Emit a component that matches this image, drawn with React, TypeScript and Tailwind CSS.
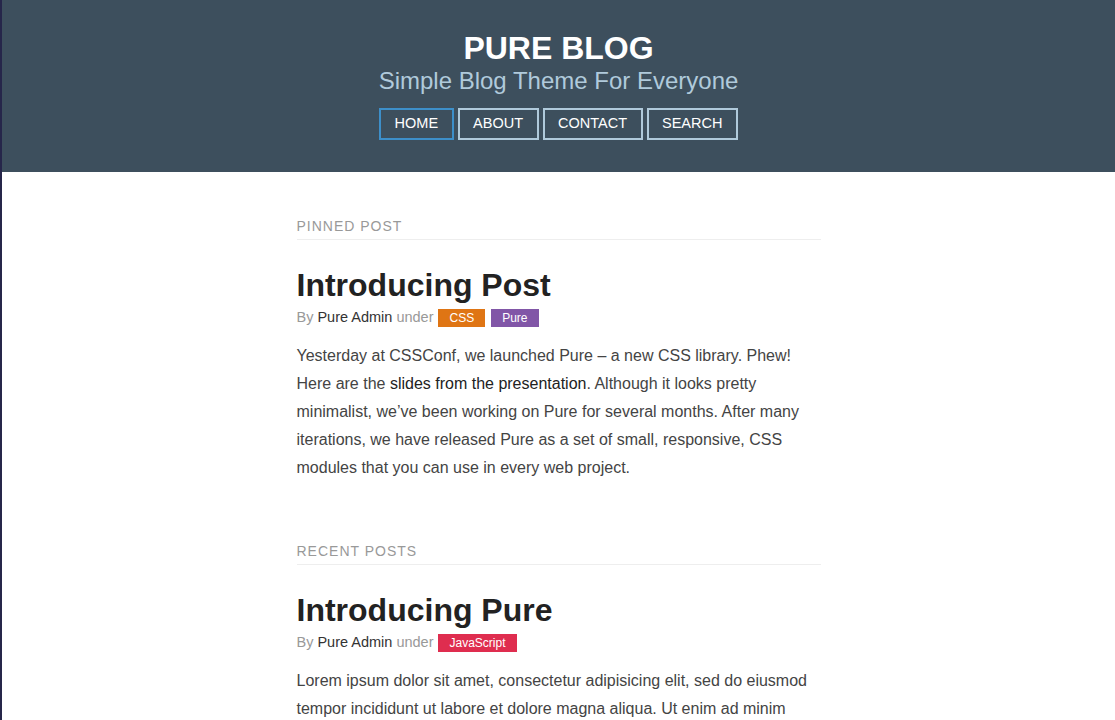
import React from 'react';

const navItems = [
  { label: 'HOME', active: true },
  { label: 'ABOUT', active: false },
  { label: 'CONTACT', active: false },
  { label: 'SEARCH', active: false },
];

function Tag({ label, color }: { label: string; color: string }) {
  return (
    <span className={`inline-flex items-center h-[18px] px-[11px] text-[12px] text-white ${color}`}>
      {label}
    </span>
  );
}

function PostMeta({ tags }: { tags: { label: string; color: string }[] }) {
  return (
    <div className="mt-[5px] flex items-center h-5 text-[14.5px] text-[#999]">
      <span>By</span>
      <span className="ml-[4px] text-[#333]">Pure Admin</span>
      <span className="ml-[4px] mr-[5px]">under</span>
      <div className="flex gap-[6px]">
        {tags.map((t) => (
          <Tag key={t.label} label={t.label} color={t.color} />
        ))}
      </div>
    </div>
  );
}

function SectionHead({ title }: { title: string }) {
  return (
    <h2 className="text-[14px] leading-5 tracking-[1px] text-[#999] uppercase pb-[3px] border-b border-[#eee]">
      {title}
    </h2>
  );
}

export default function App() {
  return (
    <div
      className="min-h-[720px] bg-white border-l-2 border-[#26264a]"
      style={{ fontFamily: '"Liberation Sans", Arial, sans-serif' }}
    >
      <header className="h-[172px] bg-[#3d4f5d] flex flex-col items-center pt-[30px]">
        <h1 className="text-[32px] leading-[36px] font-bold text-white">PURE BLOG</h1>
        <h2 className="text-[24px] leading-[30px] text-[#b0cadb]">Simple Blog Theme For Everyone</h2>
        <nav className="mt-[12px] flex gap-[4px]">
          {navItems.map((item) => (
            <a
              key={item.label}
              className={`h-8 flex items-center px-[13.5px] border-2 text-[14.5px] text-white ${
                item.active ? 'border-[#3d8fc9]' : 'border-[#b0cadb]'
              }`}
            >
              {item.label}
            </a>
          ))}
        </nav>
      </header>

      <main className="w-[524px] mx-auto pt-[44px] pb-10">
        <section>
          <SectionHead title="Pinned Post" />
          <article className="mt-[27px]">
            <h1 className="text-[32px] leading-[36px] font-bold text-[#222]">Introducing Post</h1>
            <PostMeta
              tags={[
                { label: 'CSS', color: 'bg-[#df7514]' },
                { label: 'Pure', color: 'bg-[#8156a7]' },
              ]}
            />
            <p className="mt-[14px] text-[16px] leading-[28px] text-[#444]">
              Yesterday at CSSConf, we launched Pure – a new CSS library. Phew! Here are the{' '}
              <a className="text-[#222]">slides from the presentation</a>. Although it looks pretty
              minimalist, we’ve been working on Pure for several months. After many iterations, we
              have released Pure as a set of small, responsive, CSS modules that you can use in every
              web project.
            </p>
          </article>
        </section>

        <section className="mt-[59px]">
          <SectionHead title="Recent Posts" />
          <article className="mt-[27px]">
            <h1 className="text-[32px] leading-[36px] font-bold text-[#222]">Introducing Pure</h1>
            <PostMeta tags={[{ label: 'JavaScript', color: 'bg-[#df2d4f]' }]} />
            <p className="mt-[14px] text-[16px] leading-[28px] text-[#444]">
              Lorem ipsum dolor sit amet, consectetur adipisicing elit, sed do eiusmod tempor
              incididunt ut labore et dolore magna aliqua. Ut enim ad minim veniam, quis nostrud
              exercitation ullamco laboris nisi ut aliquip ex ea commodo consequat.
            </p>
          </article>
        </section>
      </main>
    </div>
  );
}
